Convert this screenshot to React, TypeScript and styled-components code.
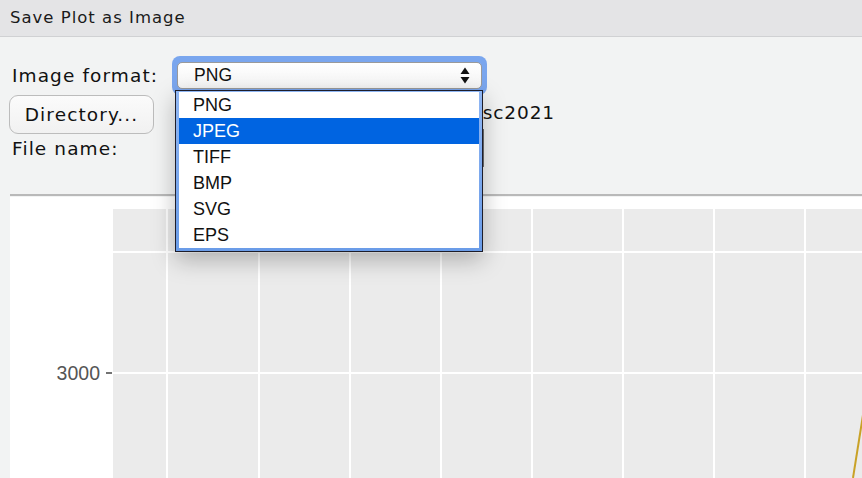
import React from "react";
import styled, { createGlobalStyle } from "styled-components";

const Global = createGlobalStyle`
  html, body { margin: 0; padding: 0; background: #f2f3f3; overflow: hidden; }
  #root { width: 862px; height: 478px; }
`;

const Window = styled.div`
  width: 862px;
  height: 478px;
  display: flex;
  flex-direction: column;
  background: #f2f3f3;
  font-family: "DejaVu Sans", sans-serif;
  color: #111;
`;

const TitleBar = styled.div`
  height: 36px;
  flex: none;
  background: #e4e4e6;
  border-bottom: 1px solid #d0d1d3;
  padding-left: 10px;
  font-size: 16.5px;
  letter-spacing: 1px;
  line-height: 36px;
  color: #1a1a1a;
`;

const Form = styled.div`
  flex: none;
  display: flex;
  flex-direction: column;
  padding: 19px 0 0 0;
`;

const Row = styled.div<{ $h: number; $pl: number; $top?: boolean }>`
  height: ${(p) => p.$h}px;
  display: flex;
  align-items: center;
  padding-left: ${(p) => p.$pl}px;
  position: relative;
  z-index: ${(p) => (p.$top ? 5 : 1)};
`;

const Label = styled.span`
  font-size: 18.5px;
  letter-spacing: 1.1px;
  color: #111;
  white-space: nowrap;
`;

const SelectWrap = styled.div`
  position: relative;
  margin-left: 14px;
  width: 315px;
  height: 39px;
  flex: none;
  box-sizing: border-box;
  border-radius: 8px;
  background: #7aa6ee;
  padding: 6px 5px 6px 5px;
  display: flex;
`;

const SelectBox = styled.div`
  flex: 1;
  background: linear-gradient(#ffffff, #f4f4f4);
  border: 1px solid #9a9a9a;
  border-radius: 5px;
  display: flex;
  align-items: center;
  padding-left: 16px;
  font-family: "Liberation Sans", sans-serif;
  font-size: 17.5px;
  color: #111;
`;

const Arrows = styled.svg`
  margin-left: auto;
  margin-right: 11px;
  flex: none;
`;

const Menu = styled.ul`
  position: absolute;
  left: 3px;
  top: 34px;
  width: 308px;
  margin: 0;
  padding: 1px 3px 3px 3px;
  list-style: none;
  box-sizing: border-box;
  border: 1px solid #1d1d2a;
  background: linear-gradient(#8fb6f3, #6a9ce8);
  box-shadow: 0 8px 22px rgba(0, 0, 0, 0.26);
  z-index: 10;
`;

const Item = styled.li<{ $active?: boolean }>`
  height: 26px;
  line-height: 26px;
  padding-left: 14px;
  font-family: "Liberation Sans", sans-serif;
  font-size: 18px;
  background: ${(p) => (p.$active ? "#0064e1" : "#ffffff")};
  color: ${(p) => (p.$active ? "#ffffff" : "#111")};
`;

const DirButton = styled.button`
  width: 145px;
  height: 39px;
  flex: none;
  border: 1.5px solid #bcbcbc;
  border-radius: 9px;
  background: linear-gradient(#fbfbfb, #f1f1f1);
  font-family: "DejaVu Sans", sans-serif;
  font-size: 18.5px;
  letter-spacing: 1.1px;
  color: #111;
  padding: 0;
  align-self: flex-start;
`;

const PathText = styled.span`
  margin-left: 15px;
  width: 386px;
  overflow: hidden;
  text-align: right;
  font-size: 18.5px;
  letter-spacing: 0.9px;
  color: #111;
  white-space: nowrap;
`;

const NameInput = styled.div`
  margin-left: 58px;
  width: 307px;
  height: 38px;
  flex: none;
  box-sizing: border-box;
  background: #fff;
  border: 1px solid #8c8c8c;
  border-right: 2px solid #6d6d6d;
`;

const Separator = styled.div`
  margin: 27px 0 0 10px;
  height: 2px;
  background: #b9b9b9;
  flex: none;
`;

const PlotArea = styled.div`
  margin-left: 10px;
  margin-top: 1px;
  flex: 1;
  background: #ffffff;
  overflow: hidden;
`;

const PlotSvg = styled.svg`
  display: block;
`;

const formats = ["PNG", "JPEG", "TIFF", "BMP", "SVG", "EPS"];
const vLines = [157, 249, 340, 431, 522, 613, 704, 795];
const hLines = [55, 176];

export default function App() {
  return (
    <Window>
      <Global />
      <TitleBar>Save Plot as Image</TitleBar>
      <Form>
        <Row $h={39} $pl={12} $top>
          <Label>Image format:</Label>
          <SelectWrap>
            <SelectBox>
              PNG
              <Arrows width="10" height="17" viewBox="0 0 10 17">
                <path d="M5 0.5 L9.5 7 H0.5 Z" fill="#111" />
                <path d="M5 16.5 L9.5 10 H0.5 Z" fill="#111" />
              </Arrows>
            </SelectBox>
            <Menu>
              {formats.map((f) => (
                <Item key={f} $active={f === "JPEG"}>
                  {f}
                </Item>
              ))}
            </Menu>
          </SelectWrap>
        </Row>
        <Row $h={34} $pl={9}>
          <DirButton>Directory...</DirButton>
          <PathText>~/Documents/R/sc2021</PathText>
        </Row>
        <Row $h={38} $pl={12}>
          <Label>File name:</Label>
          <NameInput />
        </Row>
      </Form>
      <Separator />
      <PlotArea>
        <PlotSvg width="852" height="281" viewBox="0 0 852 281">
          <rect x="103" y="12" width="760" height="280" fill="#ebebeb" />
          {hLines.map((y) => (
            <line key={y} x1="103" x2="852" y1={y} y2={y} stroke="#ffffff" strokeWidth="2" />
          ))}
          {vLines.map((x) => (
            <line key={x} x1={x} x2={x} y1="12" y2="281" stroke="#ffffff" strokeWidth="2" />
          ))}
          <line x1="96" x2="102" y1="176" y2="176" stroke="#444" strokeWidth="1.5" />
          <text
            x="90"
            y="183"
            textAnchor="end"
            fontFamily="Liberation Sans, sans-serif"
            fontSize="19.5"
            fill="#555"
          >
            3000
          </text>
          <line x1="853" y1="218" x2="843" y2="281" stroke="#c9a227" strokeWidth="2" />
        </PlotSvg>
      </PlotArea>
    </Window>
  );
}
